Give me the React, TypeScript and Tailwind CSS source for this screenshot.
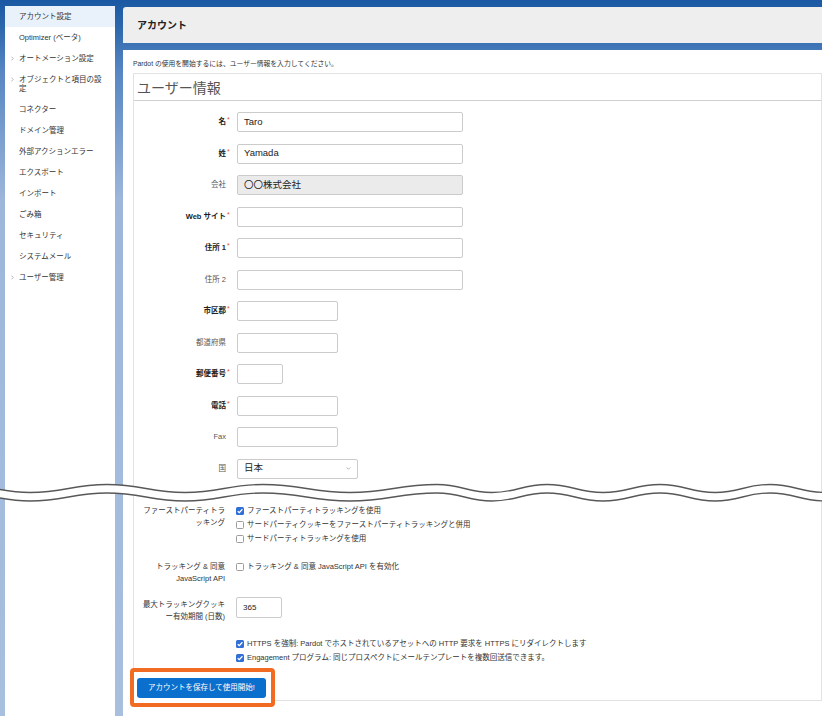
import { Fragment } from 'react';

const navItems = [
  { label: 'アカウント設定', active: true },
  { label: 'Optimizer (ベータ)' },
  { label: 'オートメーション設定', arrow: true },
  { label: 'オブジェクトと項目の設', label2: '定', arrow: true },
  { label: 'コネクター' },
  { label: 'ドメイン管理' },
  { label: '外部アクションエラー' },
  { label: 'エクスポート' },
  { label: 'インポート' },
  { label: 'ごみ箱' },
  { label: 'セキュリティ' },
  { label: 'システムメール' },
  { label: 'ユーザー管理', arrow: true },
];

interface Field {
  label: string;
  required?: boolean;
  width: string;
  value?: string;
  disabled?: boolean;
  select?: boolean;
}

const fields: Field[] = [
  { label: '名', required: true, width: 'w-[226px]', value: 'Taro' },
  { label: '姓', required: true, width: 'w-[226px]', value: 'Yamada' },
  { label: '会社', width: 'w-[226px]', value: '〇〇株式会社', disabled: true },
  { label: 'Web サイト', required: true, width: 'w-[226px]' },
  { label: '住所 1', required: true, width: 'w-[226px]' },
  { label: '住所 2', width: 'w-[226px]' },
  { label: '市区郡', required: true, width: 'w-[101px]' },
  { label: '都道府県', width: 'w-[101px]' },
  { label: '郵便番号', required: true, width: 'w-[46px]' },
  { label: '電話', required: true, width: 'w-[101px]' },
  { label: 'Fax', width: 'w-[101px]' },
  { label: '国', width: 'w-[121px]', value: '日本', select: true },
];

// wave break: alternating peak / trough x positions
const waveXs = [-40, 30, 107, 185, 263, 350, 437, 492, 547, 603, 660, 715, 770, 825, 880];

function wavePath(peak: number, trough: number) {
  let d = '';
  waveXs.forEach((x, i) => {
    const y = i % 2 === 0 ? peak : trough;
    if (i === 0) {
      d = `M${x} ${y}`;
      return;
    }
    const px = waveXs[i - 1];
    const py = (i - 1) % 2 === 0 ? peak : trough;
    const dx = (x - px) * 0.45;
    d += ` C${px + dx} ${py} ${x - dx} ${y} ${x} ${y}`;
  });
  return d;
}

function Check({ checked }: { checked?: boolean }) {
  if (checked) {
    return (
      <span className="w-[8px] h-[8px] rounded-[1.5px] bg-[#2f6fd6] flex items-center justify-center shrink-0">
        <svg viewBox="0 0 8 8" className="w-[8px] h-[8px]">
          <path d="M1.7 4.2 3.3 5.7 6.4 2.3" fill="none" stroke="#fff" strokeWidth="1.3" />
        </svg>
      </span>
    );
  }
  return <span className="w-[8px] h-[8px] rounded-[1.5px] border border-[#9c9c9c] bg-white shrink-0" />;
}

function CheckLine({ checked, text }: { checked?: boolean; text: string }) {
  return (
    <div className="flex items-center gap-[3px] h-[14px]">
      <Check checked={checked} />
      <span>{text}</span>
    </div>
  );
}

export default function App() {
  return (
    <div className="relative w-[822px] h-[716px] overflow-hidden flex gap-[8px] bg-[linear-gradient(180deg,#1a58a3_0px,#2f69ae_30px,#5686c2_70px,#9db6da_200px,#a8bfde_716px)] font-['Liberation_Sans','Noto_Sans_CJK_JP',sans-serif] text-[#333]">
      {/* Sidebar */}
      <div className="w-[110px] ml-[5px] mt-[6px] bg-white shrink-0">
        {navItems.map((item) => (
          <div
            key={item.label}
            className={`flex pl-[6px] py-[6px] text-[7.5px] leading-[9px] ${item.active ? 'bg-[#e9f1fb]' : ''}`}
          >
            <span className="w-[8px] h-[9px] flex items-center shrink-0">
              {item.arrow && (
                <svg viewBox="0 0 4 6" className="w-[3px] h-[5px]">
                  <path d="M0.5 0.5 3 3 0.5 5.5" fill="none" stroke="#888" strokeWidth="0.8" />
                </svg>
              )}
            </span>
            <span>
              {item.label}
              {item.label2 && (
                <>
                  <br />
                  {item.label2}
                </>
              )}
            </span>
          </div>
        ))}
      </div>

      {/* Main */}
      <div className="flex-1 flex flex-col">
        <div className="mt-[7px] h-[36px] bg-[#eeeeee] rounded-tl-[3px] flex items-center pl-[14px] text-[10px] font-bold text-[#222]">
          アカウント
        </div>

        <div className="mt-[7px] flex-1 bg-white pt-[10px]">
          <div className="pl-[10px] text-[6.8px] leading-[8px] text-[#333]">
            Pardot の使用を開始するには、ユーザー情報を入力してください。
          </div>

          <div className="mt-[5px] ml-[10px] border border-[#e2e2e2] flex flex-col">
            <div className="pl-[3px] pt-[7px] pb-[5px] text-[14px] leading-[14px] text-[#555] border-b border-[#cfcfcf]">
              ユーザー情報
            </div>

            {/* Upper form */}
            <div className="mt-[11px] grid grid-cols-[97px_1fr] gap-x-[6px] gap-y-[11.5px]">
              {fields.map((f) => (
                <Fragment key={f.label}>
                  <div className="flex justify-end items-center h-[20px]">
                    <span
                      className={`text-[7.5px] ${f.required ? 'font-bold text-[#222]' : 'text-[#555]'}`}
                    >
                      {f.label}
                    </span>
                    <span className="w-[5px] h-[12px] pl-[1px] text-[7px] leading-[7px] text-[#e0552b]">
                      {f.required ? '*' : ''}
                    </span>
                  </div>
                  <div
                    className={`${f.width} h-[20px] border border-[#cbcbcb] rounded-[2px] px-[6px] flex items-center justify-between text-[9.5px] text-[#222] ${f.disabled ? 'bg-[#ebebeb]' : 'bg-white'}`}
                  >
                    <span>{f.value}</span>
                    {f.select && (
                      <svg viewBox="0 0 6 4" className="w-[5px] h-[3px]">
                        <path d="M0.5 0.5 3 3 5.5 0.5" fill="none" stroke="#888" strokeWidth="0.8" />
                      </svg>
                    )}
                  </div>
                </Fragment>
              ))}
            </div>

            {/* Tracking section */}
            <div className="mt-[25.5px] flex flex-col text-[7.5px] text-[#333]">
              <div className="flex gap-[11px]">
                <div className="w-[91px] text-right leading-[12px] pt-[0.5px]">
                  ファーストパーティトラ
                  <br />
                  ッキング
                </div>
                <div className="flex flex-col">
                  <CheckLine checked text="ファーストパーティトラッキングを使用" />
                  <CheckLine text="サードパーティクッキーをファーストパーティトラッキングと併用" />
                  <CheckLine text="サードパーティトラッキングを使用" />
                </div>
              </div>

              <div className="mt-[15px] flex gap-[11px]">
                <div className="w-[91px] text-right leading-[12px]">
                  トラッキング &amp; 同意
                  <br />
                  JavaScript API
                </div>
                <div className="flex items-center gap-[3px] h-[12px]">
                  <Check />
                  <span>トラッキング &amp; 同意 JavaScript API を有効化</span>
                </div>
              </div>

              <div className="mt-[12px] flex gap-[11px]">
                <div className="w-[91px] text-right leading-[12px] pt-[2px]">
                  最大トラッキングクッキ
                  <br />
                  ー有効期間 (日数)
                </div>
                <div className="w-[46px] h-[21px] border border-[#cbcbcb] rounded-[2px] pl-[6px] flex items-center text-[8px] text-[#222]">
                  365
                </div>
              </div>

              <div className="mt-[14px] flex gap-[11px]">
                <div className="w-[91px]" />
                <div className="flex flex-col">
                  <CheckLine
                    checked
                    text="HTTPS を強制: Pardot でホストされているアセットへの HTTP 要求を HTTPS にリダイレクトします"
                  />
                  <CheckLine
                    checked
                    text="Engagement プログラム: 同じプロスペクトにメールテンプレートを複数回送信できます。"
                  />
                </div>
              </div>

              {/* highlighted save button */}
              <div className="relative z-10 self-start mt-[3px] -ml-[4px] -mb-[7px] border-[4px] border-[#f26b22] rounded-[4px] bg-white pl-[3px] pr-[5px] pt-[6px] pb-[5px]">
                <button className="w-[129px] h-[20px] rounded-[3px] bg-[#0b6fce] text-white text-[7.5px] flex items-center justify-center">
                  アカウントを保存して使用開始!
                </button>
              </div>
            </div>
          </div>
        </div>
      </div>

      {/* Screenshot cut mark */}
      <svg
        className="absolute left-0 top-[480px] z-20"
        width="822"
        height="26"
        viewBox="0 0 822 26"
      >
        <path d={wavePath(8.75, 16.75)} fill="none" stroke="#fff" strokeWidth="8.5" />
        <path d={wavePath(4.5, 12.5)} fill="none" stroke="#585858" strokeWidth="1.3" />
        <path d={wavePath(13, 21)} fill="none" stroke="#585858" strokeWidth="1.3" />
      </svg>
    </div>
  );
}
